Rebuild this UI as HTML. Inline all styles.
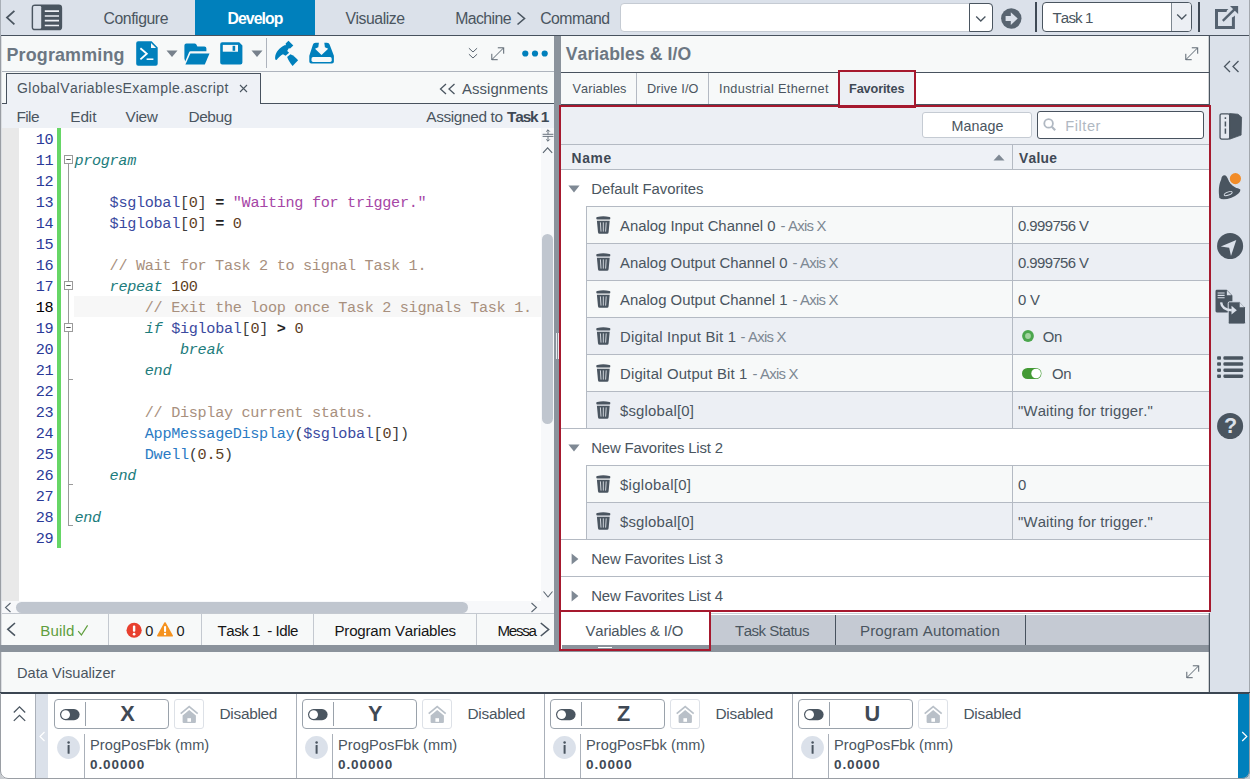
<!DOCTYPE html>
<html lang="en"><head><meta charset="utf-8"><title>Automation1 Studio - Variables &amp; I/O Favorites</title>
<style>
html,body{margin:0;padding:0;}
body{width:1250px;height:779px;overflow:hidden;position:relative;background:#dbe1ea;font-family:"Liberation Sans",Arial,sans-serif;font-kerning:none;}
#app{position:absolute;left:0;top:0;width:1250px;height:779px;overflow:hidden;}
#app div,#app span,#app svg{position:absolute;box-sizing:border-box;}
.t{white-space:pre;line-height:1;}
.m{font-family:"Liberation Mono","DejaVu Sans Mono",monospace;}
</style></head><body><div id="app">
<div style="left:0px;top:0px;width:1250px;height:35px;background:#dbe1ea;"></div>
<div style="left:0px;top:35px;width:1250px;height:1px;background:#48525e;"></div>
<div style="left:195px;top:0px;width:120px;height:35px;background:#0080bc;"></div>
<span class="t" style="left:103.50px;top:10.63px;font-size:15.8px;color:#4a5560;letter-spacing:-0.44px;">Configure</span>
<span class="t" style="left:227.50px;top:10.63px;font-size:15.8px;color:#ffffff;letter-spacing:-0.91px;font-weight:bold;">Develop</span>
<span class="t" style="left:345.50px;top:10.63px;font-size:15.8px;color:#4a5560;letter-spacing:-0.47px;">Visualize</span>
<span class="t" style="left:455.20px;top:10.63px;font-size:15.8px;color:#4a5560;letter-spacing:-0.57px;">Machine</span>
<span class="t" style="left:540.20px;top:10.63px;font-size:15.8px;color:#4a5560;letter-spacing:-0.51px;">Command</span>
<svg style="left:5px;top:10px;" width="12" height="16" viewBox="0 0 12 16"><path d="M9.4 0.9 L2 7.6 L9.4 14.3" fill="none" stroke="#4a5560" stroke-width="1.8"/></svg>
<svg style="left:516px;top:11px;" width="11" height="15" viewBox="0 0 11 15"><path d="M1.5 1.5 L8.5 7.5 L1.5 13.5" fill="none" stroke="#4a5560" stroke-width="1.6"/></svg>
<svg style="left:31px;top:4px;" width="33" height="27" viewBox="0 0 33 27"><rect x="1.4" y="1.3" width="29" height="24.2" rx="2.6" fill="#4a5560" stroke="#4a5560" stroke-width="1.5"/><rect x="2.1" y="2.1" width="8.1" height="22.6" rx="1.2" fill="#dbe1ea"/><path d="M13.8 7.2h14.2M13.8 12h14.2M13.8 16.7h14.2M13.8 21.5h14.2" stroke="#edf0f5" stroke-width="1.7"/></svg>
<div style="left:620px;top:3px;width:372.5px;height:28.5px;background:#fff;border:1px solid #c5cbd3;border-radius:4px;"></div>
<div style="left:969px;top:3px;width:23.5px;height:28.5px;border:1px solid #4a5560;border-radius:0 4px 4px 0;"></div>
<svg style="left:975px;top:15px;" width="12" height="8" viewBox="0 0 12 8"><path d="M1.2 1.5 L5.8 6 L10.4 1.5" fill="none" stroke="#4a5560" stroke-width="1.3"/></svg>
<svg style="left:1000.8px;top:8px;" width="21" height="21" viewBox="0 0 21 21"><circle cx="10.3" cy="10.5" r="10.2" fill="#586470"/><path d="M4.6 8.1h5.2V4.2L16.7 10.6l-6.9 6.4v-3.9H4.6z" fill="#dbe1ea"/></svg>
<div style="left:1035px;top:2px;width:2px;height:29.5px;background:#3f4955;"></div>
<div style="left:1042px;top:2px;width:150px;height:29.5px;background:#fff;border:1px solid #4a5560;border-radius:4px;"></div>
<div style="left:1171px;top:3px;width:20px;height:27.5px;background:#eceff4;border-left:1px solid #7d8791;border-radius:0 3px 3px 0;"></div>
<svg style="left:1176px;top:13px;" width="12" height="8" viewBox="0 0 12 8"><path d="M1.2 1.5 L5.8 6 L10.4 1.5" fill="none" stroke="#4a5560" stroke-width="1.3"/></svg>
<span class="t" style="left:1052.50px;top:10.22px;font-size:15.1px;color:#4a5560;letter-spacing:-0.86px;">Task 1</span>
<div style="left:1197.5px;top:2px;width:2px;height:29.5px;background:#3f4955;"></div>
<svg style="left:1215px;top:5px;" width="24" height="25" viewBox="0 0 24 25"><path d="M11.6 5.5H1.5V22.4H18.4V12.6" fill="none" stroke="#556270" stroke-width="3"/><path d="M11.4 4L13.4 4L10.4 7L10.4 4z M16.9 13L19.9 10.4V13z" fill="#556270"/><path d="M7.8 15.8L20.5 3.4" fill="none" stroke="#556270" stroke-width="2.4"/><path d="M15 1H23.1V8.9z" fill="#556270"/></svg>
<div style="left:0px;top:36px;width:1px;height:657px;background:#9a9ea4;"></div>
<div style="left:1px;top:36px;width:1px;height:657px;background:#dcdfe3;"></div>
<div style="left:0px;top:0px;width:1px;height:36px;background:#a9afb7;"></div>
<div style="left:2px;top:36px;width:552px;height:35px;background:#f7f9f9;"></div>
<div style="left:2px;top:71px;width:552px;height:1px;background:#aeb4bd;"></div>
<span class="t" style="left:6.50px;top:46.55px;font-size:17.9px;color:#6c7783;letter-spacing:0.16px;font-weight:bold;">Programming</span>
<svg style="left:135.5px;top:41px;" width="22" height="25" viewBox="0 0 22 25"><path d="M2.2 0.3H15.6L21.7 6.4V22.8a2 2 0 0 1-2 2H2.2a2 2 0 0 1-2-2V2.3a2 2 0 0 1 2-2z" fill="#0080bc"/><path d="M15 1.9V7H20.1z" fill="#f7f9f9"/><path d="M4.4 7.2L10.8 12.8L4.4 18.4" fill="none" stroke="#fff" stroke-width="1.8"/><path d="M10.6 18.2h6.8" stroke="#fff" stroke-width="1.5"/></svg>
<svg style="left:165.5px;top:49.5px;" width="12" height="7.5" viewBox="0 0 12 7.5"><path d="M0.5 0.6h11L6 6.9z" fill="#77818c"/></svg>
<svg style="left:183.5px;top:42.5px;" width="26" height="22" viewBox="0 0 26 22"><path d="M0.4 15.5V2.4a2 2 0 0 1 2-2H10.6a2 2 0 0 1 1.6 0.9l1.2 2.1H20.4a2 2 0 0 1 2 2V8.3H6.6a1.6 1.6 0 0 0-1.5 1L1.2 18.5z" fill="#0080bc"/><path d="M6.4 10.4H25.5L20.8 21.4H1.4z" fill="#0080bc"/></svg>
<svg style="left:220px;top:42px;" width="23" height="23" viewBox="0 0 23 23"><path d="M2.2 0.3H19.2L22.4 3.5V20.5a2 2 0 0 1-2 2H2.2a2 2 0 0 1-2-2V2.3a2 2 0 0 1 2-2z" fill="#0080bc"/><rect x="2.8" y="2.9" width="15.2" height="6.8" fill="#f7f9f9"/><rect x="12.6" y="3.8" width="2.6" height="5" fill="#0080bc"/></svg>
<svg style="left:250.5px;top:49.5px;" width="12" height="7.5" viewBox="0 0 12 7.5"><path d="M0.5 0.6h11L6 6.9z" fill="#77818c"/></svg>
<div style="left:266px;top:38px;width:1px;height:30px;background:#aeb4bd;"></div>
<svg style="left:274px;top:40px;" width="26" height="27" viewBox="0 0 26 27"><g fill="#0080bc"><path d="M1.2 19.4C0.6 13.6 4 9 8.7 6.2C10 5.4 11.2 5.2 11.9 5L11.6 3.4L14.5 0.8L19.3 5.6L16.1 8.5L14.8 8.2L13.2 11L15.1 12.8L11.6 15.8L9 14.2C6.6 15.4 4.4 17.6 2.6 20z"/><path d="M13.1 17.1L16.4 14.2C19.4 15.4 22 17.6 24.1 20.3L18.6 26C16.4 23.4 14.4 20.6 13.1 17.1z"/></g></svg>
<svg style="left:309px;top:42px;" width="26" height="23" viewBox="0 0 26 23"><path d="M6.7 0.7H9.9L9.3 5.2 6 6.8 12.5 12.9 19.2 6.8 15.9 5.2 15.3 0.7H17.9C19.4 0.7 20.3 1.6 20.8 3L24.9 13.8V19.5a2 2 0 0 1-2 2H2.3a2 2 0 0 1-2-2V13.8L3.8 3C4.3 1.6 5.2 0.7 6.7 0.7z" fill="#0080bc"/><rect x="2.5" y="15.1" width="20.2" height="4.8" rx="1.6" fill="#f7f9f9"/></svg>
<svg style="left:468px;top:47px;" width="11" height="12" viewBox="0 0 11 12"><path d="M0.9 1.2L5 5L9.1 1.2M0.9 7.2L5 11L9.1 7.2" fill="none" stroke="#5a6570" stroke-width="1"/></svg>
<svg style="left:491px;top:47px;" width="14" height="14" viewBox="0 0 14 14"><path d="M0.8 12.7L12.7 0.8M6.8 0.8H12.7V6.7M0.8 6.8V12.7H6.7" fill="none" stroke="#5a6570" stroke-width="1"/></svg>
<svg style="left:522px;top:49.5px;" width="26" height="7" viewBox="0 0 26 7"><circle cx="3.3" cy="3.5" r="3.1" fill="#0080bc"/><circle cx="13" cy="3.5" r="3.1" fill="#0080bc"/><circle cx="22.7" cy="3.5" r="3.1" fill="#0080bc"/></svg>
<div style="left:2px;top:72px;width:552px;height:31px;background:#f7f9f9;"></div>
<div style="left:2px;top:103px;width:552px;height:1px;background:#48525e;"></div>
<div style="left:6px;top:73px;width:254.5px;height:31px;background:#eef1f6;border:1px solid #48525e;border-bottom:0;"></div>
<span class="t" style="left:17.00px;top:80.65px;font-size:14px;color:#4a5560;letter-spacing:0.45px;">GlobalVariablesExample.ascript</span>
<svg style="left:239px;top:84px;" width="9" height="9" viewBox="0 0 9 9"><path d="M1 1L8 8M8 1L1 8" stroke="#4a5560" stroke-width="1.1"/></svg>
<svg style="left:439px;top:82.5px;" width="17" height="12" viewBox="0 0 17 12"><path d="M7 1L1.5 6L7 11M15.5 1L10 6L15.5 11" fill="none" stroke="#4a5560" stroke-width="1.3"/></svg>
<span class="t" style="left:462.00px;top:81.79px;font-size:14.9px;color:#4a5560;letter-spacing:0.07px;">Assignments</span>
<div style="left:2px;top:104px;width:552px;height:24px;background:#eef1f6;"></div>
<span class="t" style="left:16.50px;top:108.96px;font-size:15.4px;color:#4a5560;letter-spacing:-0.61px;">File</span>
<span class="t" style="left:70.25px;top:108.96px;font-size:15.4px;color:#4a5560;letter-spacing:-0.1px;">Edit</span>
<span class="t" style="left:125.50px;top:108.96px;font-size:15.4px;color:#4a5560;letter-spacing:-0.29px;">View</span>
<span class="t" style="left:188.50px;top:108.96px;font-size:15.4px;color:#4a5560;letter-spacing:-0.41px;">Debug</span>
<span class="t" style="left:426.25px;top:108.96px;font-size:15.4px;color:#4a5560;letter-spacing:-0.37px;">Assigned to</span>
<span class="t" style="left:507.00px;top:108.96px;font-size:15.4px;color:#3f4955;letter-spacing:-1.14px;font-weight:bold;">Task 1</span>
<div style="left:2px;top:128px;width:552px;height:473px;background:#ffffff;"></div>
<div style="left:2px;top:128px;width:17px;height:473px;background:#e9e9e9;"></div>
<div style="left:57px;top:128px;width:4px;height:420px;background:#66d666;"></div>
<div style="left:74px;top:296px;width:467px;height:21px;background:#f7f7f7;"></div>
<span class="t m" style="left:35.8px;top:133.26px;font-size:15.2px;letter-spacing:-0.32px;color:#2a3a98;">10</span>
<span class="t m" style="left:35.8px;top:154.26px;font-size:15.2px;letter-spacing:-0.32px;color:#2a3a98;">11</span>
<span class="t m" style="left:35.8px;top:175.26px;font-size:15.2px;letter-spacing:-0.32px;color:#2a3a98;">12</span>
<span class="t m" style="left:35.8px;top:196.26px;font-size:15.2px;letter-spacing:-0.32px;color:#2a3a98;">13</span>
<span class="t m" style="left:35.8px;top:217.26px;font-size:15.2px;letter-spacing:-0.32px;color:#2a3a98;">14</span>
<span class="t m" style="left:35.8px;top:238.26px;font-size:15.2px;letter-spacing:-0.32px;color:#2a3a98;">15</span>
<span class="t m" style="left:35.8px;top:259.26px;font-size:15.2px;letter-spacing:-0.32px;color:#2a3a98;">16</span>
<span class="t m" style="left:35.8px;top:280.26px;font-size:15.2px;letter-spacing:-0.32px;color:#2a3a98;">17</span>
<span class="t m" style="left:35.8px;top:301.26px;font-size:15.2px;letter-spacing:-0.32px;color:#000000;">18</span>
<span class="t m" style="left:35.8px;top:322.26px;font-size:15.2px;letter-spacing:-0.32px;color:#2a3a98;">19</span>
<span class="t m" style="left:35.8px;top:343.26px;font-size:15.2px;letter-spacing:-0.32px;color:#2a3a98;">20</span>
<span class="t m" style="left:35.8px;top:364.26px;font-size:15.2px;letter-spacing:-0.32px;color:#2a3a98;">21</span>
<span class="t m" style="left:35.8px;top:385.26px;font-size:15.2px;letter-spacing:-0.32px;color:#2a3a98;">22</span>
<span class="t m" style="left:35.8px;top:406.26px;font-size:15.2px;letter-spacing:-0.32px;color:#2a3a98;">23</span>
<span class="t m" style="left:35.8px;top:427.26px;font-size:15.2px;letter-spacing:-0.32px;color:#2a3a98;">24</span>
<span class="t m" style="left:35.8px;top:448.26px;font-size:15.2px;letter-spacing:-0.32px;color:#2a3a98;">25</span>
<span class="t m" style="left:35.8px;top:469.26px;font-size:15.2px;letter-spacing:-0.32px;color:#2a3a98;">26</span>
<span class="t m" style="left:35.8px;top:490.26px;font-size:15.2px;letter-spacing:-0.32px;color:#2a3a98;">27</span>
<span class="t m" style="left:35.8px;top:511.26px;font-size:15.2px;letter-spacing:-0.32px;color:#2a3a98;">28</span>
<span class="t m" style="left:35.8px;top:532.26px;font-size:15.2px;letter-spacing:-0.32px;color:#2a3a98;">29</span>
<span class="t m" style="left:74.40px;top:154.26px;font-size:15.2px;letter-spacing:-0.32px;color:#1c7c7c;font-style:italic;">program</span>
<span class="t m" style="left:109.60px;top:196.26px;font-size:15.2px;letter-spacing:-0.32px;color:#3b4a9f;">$sglobal</span>
<span class="t m" style="left:180.00px;top:196.26px;font-size:15.2px;letter-spacing:-0.32px;color:#3c3c3c;">[</span>
<span class="t m" style="left:188.80px;top:196.26px;font-size:15.2px;letter-spacing:-0.32px;color:#5c3d1e;">0</span>
<span class="t m" style="left:197.60px;top:196.26px;font-size:15.2px;letter-spacing:-0.32px;color:#3c3c3c;">]</span>
<span class="t m" style="left:206.40px;top:196.26px;font-size:15.2px;letter-spacing:-0.32px;color:#3c3c3c;"> </span>
<span class="t m" style="left:215.20px;top:196.26px;font-size:15.2px;letter-spacing:-0.32px;color:#222222;font-weight:bold;">=</span>
<span class="t m" style="left:224.00px;top:196.26px;font-size:15.2px;letter-spacing:-0.32px;color:#3c3c3c;"> </span>
<span class="t m" style="left:232.80px;top:196.26px;font-size:15.2px;letter-spacing:-0.32px;color:#a646a6;">"Waiting for trigger."</span>
<span class="t m" style="left:109.60px;top:217.26px;font-size:15.2px;letter-spacing:-0.32px;color:#3b4a9f;">$iglobal</span>
<span class="t m" style="left:180.00px;top:217.26px;font-size:15.2px;letter-spacing:-0.32px;color:#3c3c3c;">[</span>
<span class="t m" style="left:188.80px;top:217.26px;font-size:15.2px;letter-spacing:-0.32px;color:#5c3d1e;">0</span>
<span class="t m" style="left:197.60px;top:217.26px;font-size:15.2px;letter-spacing:-0.32px;color:#3c3c3c;">]</span>
<span class="t m" style="left:206.40px;top:217.26px;font-size:15.2px;letter-spacing:-0.32px;color:#3c3c3c;"> </span>
<span class="t m" style="left:215.20px;top:217.26px;font-size:15.2px;letter-spacing:-0.32px;color:#222222;font-weight:bold;">=</span>
<span class="t m" style="left:224.00px;top:217.26px;font-size:15.2px;letter-spacing:-0.32px;color:#3c3c3c;"> </span>
<span class="t m" style="left:232.80px;top:217.26px;font-size:15.2px;letter-spacing:-0.32px;color:#5c3d1e;">0</span>
<span class="t m" style="left:109.60px;top:259.26px;font-size:15.2px;letter-spacing:-0.32px;color:#a8907e;">// Wait for Task 2 to signal Task 1.</span>
<span class="t m" style="left:109.60px;top:280.26px;font-size:15.2px;letter-spacing:-0.32px;color:#1c7c7c;font-style:italic;">repeat</span>
<span class="t m" style="left:162.40px;top:280.26px;font-size:15.2px;letter-spacing:-0.32px;color:#3c3c3c;"> </span>
<span class="t m" style="left:171.20px;top:280.26px;font-size:15.2px;letter-spacing:-0.32px;color:#5c3d1e;">100</span>
<span class="t m" style="left:144.80px;top:301.26px;font-size:15.2px;letter-spacing:-0.32px;color:#a8907e;">// Exit the loop once Task 2 signals Task 1.</span>
<span class="t m" style="left:144.80px;top:322.26px;font-size:15.2px;letter-spacing:-0.32px;color:#1c7c7c;font-style:italic;">if</span>
<span class="t m" style="left:162.40px;top:322.26px;font-size:15.2px;letter-spacing:-0.32px;color:#3c3c3c;"> </span>
<span class="t m" style="left:171.20px;top:322.26px;font-size:15.2px;letter-spacing:-0.32px;color:#3b4a9f;">$iglobal</span>
<span class="t m" style="left:241.60px;top:322.26px;font-size:15.2px;letter-spacing:-0.32px;color:#3c3c3c;">[</span>
<span class="t m" style="left:250.40px;top:322.26px;font-size:15.2px;letter-spacing:-0.32px;color:#5c3d1e;">0</span>
<span class="t m" style="left:259.20px;top:322.26px;font-size:15.2px;letter-spacing:-0.32px;color:#3c3c3c;">]</span>
<span class="t m" style="left:268.00px;top:322.26px;font-size:15.2px;letter-spacing:-0.32px;color:#3c3c3c;"> </span>
<span class="t m" style="left:276.80px;top:322.26px;font-size:15.2px;letter-spacing:-0.32px;color:#222222;font-weight:bold;">&gt;</span>
<span class="t m" style="left:285.60px;top:322.26px;font-size:15.2px;letter-spacing:-0.32px;color:#3c3c3c;"> </span>
<span class="t m" style="left:294.40px;top:322.26px;font-size:15.2px;letter-spacing:-0.32px;color:#5c3d1e;">0</span>
<span class="t m" style="left:180.00px;top:343.26px;font-size:15.2px;letter-spacing:-0.32px;color:#1c7c7c;font-style:italic;">break</span>
<span class="t m" style="left:144.80px;top:364.26px;font-size:15.2px;letter-spacing:-0.32px;color:#1c7c7c;font-style:italic;">end</span>
<span class="t m" style="left:144.80px;top:406.26px;font-size:15.2px;letter-spacing:-0.32px;color:#a8907e;">// Display current status.</span>
<span class="t m" style="left:144.80px;top:427.26px;font-size:15.2px;letter-spacing:-0.32px;color:#2b7bc4;">AppMessageDisplay</span>
<span class="t m" style="left:294.40px;top:427.26px;font-size:15.2px;letter-spacing:-0.32px;color:#3c3c3c;">(</span>
<span class="t m" style="left:303.20px;top:427.26px;font-size:15.2px;letter-spacing:-0.32px;color:#3b4a9f;">$sglobal</span>
<span class="t m" style="left:373.60px;top:427.26px;font-size:15.2px;letter-spacing:-0.32px;color:#3c3c3c;">[</span>
<span class="t m" style="left:382.40px;top:427.26px;font-size:15.2px;letter-spacing:-0.32px;color:#5c3d1e;">0</span>
<span class="t m" style="left:391.20px;top:427.26px;font-size:15.2px;letter-spacing:-0.32px;color:#3c3c3c;">]</span>
<span class="t m" style="left:400.00px;top:427.26px;font-size:15.2px;letter-spacing:-0.32px;color:#3c3c3c;">)</span>
<span class="t m" style="left:144.80px;top:448.26px;font-size:15.2px;letter-spacing:-0.32px;color:#2b7bc4;">Dwell</span>
<span class="t m" style="left:188.80px;top:448.26px;font-size:15.2px;letter-spacing:-0.32px;color:#3c3c3c;">(</span>
<span class="t m" style="left:197.60px;top:448.26px;font-size:15.2px;letter-spacing:-0.32px;color:#5c3d1e;">0.5</span>
<span class="t m" style="left:224.00px;top:448.26px;font-size:15.2px;letter-spacing:-0.32px;color:#3c3c3c;">)</span>
<span class="t m" style="left:109.60px;top:469.26px;font-size:15.2px;letter-spacing:-0.32px;color:#1c7c7c;font-style:italic;">end</span>
<span class="t m" style="left:74.40px;top:511.26px;font-size:15.2px;letter-spacing:-0.32px;color:#1c7c7c;font-style:italic;">end</span>
<div style="left:68px;top:164px;width:1px;height:362px;background:#9a9a9a;"></div>
<svg style="left:64px;top:154.5px;" width="9" height="9" viewBox="0 0 9 9"><rect x="0.5" y="0.5" width="8" height="8" fill="#fff" stroke="#9a9a9a" stroke-width="1"/><path d="M2.3 4.5h4.4" stroke="#555" stroke-width="1"/></svg>
<svg style="left:64px;top:280.5px;" width="9" height="9" viewBox="0 0 9 9"><rect x="0.5" y="0.5" width="8" height="8" fill="#fff" stroke="#9a9a9a" stroke-width="1"/><path d="M2.3 4.5h4.4" stroke="#555" stroke-width="1"/></svg>
<svg style="left:64px;top:322.5px;" width="9" height="9" viewBox="0 0 9 9"><rect x="0.5" y="0.5" width="8" height="8" fill="#fff" stroke="#9a9a9a" stroke-width="1"/><path d="M2.3 4.5h4.4" stroke="#555" stroke-width="1"/></svg>
<div style="left:68px;top:379px;width:5px;height:1px;background:#9a9a9a;"></div>
<div style="left:68px;top:484px;width:5px;height:1px;background:#9a9a9a;"></div>
<div style="left:68px;top:525px;width:5px;height:1px;background:#9a9a9a;"></div>
<div style="left:541px;top:128px;width:13px;height:473px;background:#f7f8fa;"></div>
<div style="left:541.5px;top:234px;width:11.5px;height:190px;background:#c0c6cf;border-radius:6px;"></div>
<svg style="left:541.5px;top:129px;" width="12" height="14" viewBox="0 0 12 14"><path d="M0.6 5.3h10.8M0.6 7.4h10.8M6 0.8v4.5M6 7.4v4.8M4.2 2.6L6 0.8L7.8 2.6M4.2 10.4L6 12.2L7.8 10.4" fill="none" stroke="#5a6570" stroke-width="0.9"/></svg>
<svg style="left:541.5px;top:146px;" width="12" height="9" viewBox="0 0 12 9"><path d="M1 6.8L5.6 1.8L10.2 6.8" fill="none" stroke="#5a6570" stroke-width="1.1"/></svg>
<svg style="left:542px;top:590px;" width="12" height="9" viewBox="0 0 12 9"><path d="M1.5 1.5L6 7L10.5 1.5" fill="none" stroke="#5a6570" stroke-width="1.1"/></svg>
<div style="left:2px;top:601px;width:552px;height:12.5px;background:#f7f8fa;"></div>
<div style="left:16px;top:601.5px;width:451.5px;height:11px;background:#c0c6cf;border-radius:6px;"></div>
<svg style="left:4px;top:602px;" width="8" height="11" viewBox="0 0 8 11"><path d="M6.5 1L1.5 5.5L6.5 10" fill="none" stroke="#5a6570" stroke-width="1.1"/></svg>
<svg style="left:529.5px;top:602px;" width="8" height="11" viewBox="0 0 8 11"><path d="M1.5 1L6.5 5.5L1.5 10" fill="none" stroke="#5a6570" stroke-width="1.1"/></svg>
<div style="left:2px;top:613px;width:552px;height:32px;background:#f7f9f9;border-top:1px solid #c4c9d0;"></div>
<svg style="left:6px;top:622.3px;" width="11" height="15" viewBox="0 0 11 15"><path d="M9 1L1.8 7.3L9 13.6" fill="none" stroke="#4a5560" stroke-width="1.6"/></svg>
<span class="t" style="left:40.25px;top:623.12px;font-size:15.1px;color:#5f9e3d;letter-spacing:0.17px;">Build</span>
<svg style="left:77px;top:623.8px;" width="13" height="13" viewBox="0 0 13 13"><path d="M1.2 7.2L4.4 11L10.6 1.4" fill="none" stroke="#5f9e3d" stroke-width="1.2"/></svg>
<div style="left:108px;top:614px;width:1px;height:31px;background:#c4c9d0;"></div>
<svg style="left:125.5px;top:621.8px;" width="16.5" height="16.5" viewBox="0 0 16.5 16.5"><circle cx="8.1" cy="8.25" r="7.6" fill="#e8402f"/><rect x="6.9" y="3.4" width="2.4" height="6.4" rx="1" fill="#fff"/><circle cx="8.1" cy="12.2" r="1.35" fill="#fff"/></svg>
<span class="t" style="left:145.25px;top:623.54px;font-size:14.6px;color:#1c1c1c;letter-spacing:-0.37px;">0</span>
<svg style="left:155.5px;top:621.3px;" width="18" height="16" viewBox="0 0 18 16"><path d="M9 2L16.2 14.8H1.8z" fill="#f5921e" stroke="#f5921e" stroke-width="1.6" stroke-linejoin="round"/><rect x="8" y="5" width="2.1" height="6" rx="0.9" fill="#fff"/><circle cx="9.05" cy="13" r="1.2" fill="#fff"/></svg>
<span class="t" style="left:176.50px;top:623.54px;font-size:14.6px;color:#1c1c1c;letter-spacing:-0.37px;">0</span>
<div style="left:201px;top:614px;width:1px;height:31px;background:#c4c9d0;"></div>
<span class="t" style="left:217.50px;top:623.12px;font-size:15.1px;color:#151515;letter-spacing:-0.48px;">Task 1  - Idle</span>
<div style="left:313px;top:614px;width:1px;height:31px;background:#c4c9d0;"></div>
<span class="t" style="left:334.50px;top:623.12px;font-size:15.1px;color:#151515;letter-spacing:-0.21px;">Program Variables</span>
<div style="left:476px;top:614px;width:1px;height:31px;background:#c4c9d0;"></div>
<span class="t" style="left:497.50px;top:623.12px;font-size:15.1px;color:#151515;letter-spacing:-1.24px;">Messa</span>
<svg style="left:539px;top:622px;" width="12" height="16" viewBox="0 0 12 16"><path d="M1.8 1L9.6 7.5L1.8 14" fill="none" stroke="#4a5560" stroke-width="1.6"/></svg>
<div style="left:554px;top:36px;width:7px;height:610px;background:#8b939c;"></div>
<div style="left:555.5px;top:333px;width:1px;height:26px;background:#e8ebef;"></div>
<div style="left:557.5px;top:333px;width:1px;height:26px;background:#e8ebef;"></div>
<div style="left:561px;top:36px;width:649px;height:36px;background:#f7f9f9;"></div>
<div style="left:561px;top:72px;width:649px;height:1px;background:#48525e;"></div>
<span class="t" style="left:565.70px;top:46.10px;font-size:17.6px;color:#6c7783;letter-spacing:0.1px;font-weight:bold;">Variables &amp; I/O</span>
<svg style="left:1185px;top:47px;" width="14" height="14" viewBox="0 0 14 14"><path d="M0.8 12.7L12.7 0.8M6.8 0.8H12.7V6.7M0.8 6.8V12.7H6.7" fill="none" stroke="#5a6570" stroke-width="1"/></svg>
<div style="left:561px;top:73px;width:277px;height:31px;background:#f7f9f9;"></div>
<div style="left:916px;top:73px;width:294px;height:31px;background:#ffffff;"></div>
<div style="left:561px;top:104px;width:649px;height:1px;background:#48525e;"></div>
<div style="left:636px;top:73px;width:1px;height:31px;background:#b4bac3;"></div>
<div style="left:708px;top:73px;width:1px;height:31px;background:#b4bac3;"></div>
<span class="t" style="left:572.50px;top:82.65px;font-size:12.7px;color:#4a5560;letter-spacing:0.13px;">Variables</span>
<span class="t" style="left:647.00px;top:82.65px;font-size:12.7px;color:#4a5560;letter-spacing:0.18px;">Drive I/O</span>
<span class="t" style="left:719.00px;top:82.65px;font-size:12.7px;color:#4a5560;letter-spacing:0.36px;">Industrial Ethernet</span>
<div style="left:559px;top:105px;width:652px;height:507px;background:#eceff4;border:2.5px solid #a6192e;"></div>
<div style="left:838px;top:70px;width:78px;height:38px;background:#eceff4;border:2.5px solid #a6192e;"></div>
<span class="t" style="left:849.00px;top:82.65px;font-size:12.7px;color:#3f4955;letter-spacing:-0.12px;font-weight:bold;font-weight:bold;">Favorites</span>
<div style="left:921.5px;top:112px;width:110.5px;height:26px;background:#fff;border:1px solid #c5cbd3;border-radius:3px;"></div>
<span class="t" style="left:951.50px;top:119.10px;font-size:14.3px;color:#4a5560;letter-spacing:0.06px;">Manage</span>
<div style="left:1037px;top:111px;width:167px;height:28px;background:#fff;border:1px solid #48525e;border-radius:3px;"></div>
<svg style="left:1042.5px;top:117.5px;" width="15" height="15" viewBox="0 0 15 15"><circle cx="5.6" cy="5.4" r="4.3" fill="none" stroke="#b0b8c2" stroke-width="1.8"/><path d="M8.8 8.8L12.2 12.2" stroke="#b0b8c2" stroke-width="2.2"/></svg>
<span class="t" style="left:1065.25px;top:118.84px;font-size:14.6px;color:#b0b8c2;letter-spacing:0.56px;">Filter</span>
<div style="left:561px;top:144px;width:648px;height:26px;background:#eef1f6;border-top:1px solid #b4bac3;border-bottom:1px solid #b4bac3;"></div>
<span class="t" style="left:571.50px;top:151.52px;font-size:13.8px;color:#3f4955;letter-spacing:0.72px;font-weight:bold;">Name</span>
<span class="t" style="left:1019.00px;top:151.52px;font-size:13.8px;color:#3f4955;letter-spacing:0.3px;font-weight:bold;">Value</span>
<div style="left:1012px;top:145px;width:1px;height:24px;background:#b4bac3;"></div>
<svg style="left:993px;top:153.5px;" width="12" height="7" viewBox="0 0 12 7"><path d="M0.5 6.5L6 0.6L11.5 6.5z" fill="#7f8994"/></svg>
<div style="left:561px;top:170px;width:648px;height:440px;background:#ffffff;"></div>
<div style="left:561px;top:170px;width:648px;height:37px;background:#ffffff;"></div>
<div style="left:586px;top:206px;width:623px;height:1px;background:#b4bac3;"></div>
<svg style="left:568px;top:185px;" width="12" height="8" viewBox="0 0 12 8"><path d="M0.4 0.6h11.2L6 7.4z" fill="#7f8994"/></svg>
<span class="t" style="left:591.25px;top:181.89px;font-size:14.9px;color:#4a5560;letter-spacing:-0.02px;">Default Favorites</span>
<div style="left:586px;top:207px;width:623px;height:37px;background:#f7f9f9;border-bottom:1px solid #b4bac3;border-left:1px solid #b4bac3;"></div>
<div style="left:1012px;top:207px;width:1px;height:36px;background:#b4bac3;"></div>
<svg style="left:595.5px;top:216px;" width="15" height="18" viewBox="0 0 15 18"><path d="M1.2 0.9Q7.3 -0.6 13.4 0.9a0.9 0.9 0 0 1 0.9 0.9v0.8a0.9 0.9 0 0 1-0.9 0.9H1.2a0.9 0.9 0 0 1-0.9-0.9V1.8a0.9 0.9 0 0 1 0.9-0.9z" fill="#4a5560"/><path d="M0.9 4.7H13.7L12.6 16.3a1.6 1.6 0 0 1-1.6 1.5H3.6a1.6 1.6 0 0 1-1.6-1.5z" fill="#4a5560"/><path d="M4.4 6.4l0.6 9.2M7.3 6.4v9.2M10.2 6.4l-0.6 9.2" stroke="#dfe3e9" stroke-width="0.9" fill="none"/></svg>
<span class="t" style="left:620.00px;top:218.89px;font-size:14.9px;color:#4a5560;letter-spacing:-0.01px;">Analog Input Channel 0</span>
<span class="t" style="left:780.50px;top:218.89px;font-size:14.9px;color:#7d8893;letter-spacing:-0.76px;">- Axis X</span>
<span class="t" style="left:1018.10px;top:218.89px;font-size:14.9px;color:#4a5560;letter-spacing:-0.59px;">0.999756 V</span>
<div style="left:586px;top:244px;width:623px;height:37px;background:#eceff4;border-bottom:1px solid #b4bac3;border-left:1px solid #b4bac3;"></div>
<div style="left:1012px;top:244px;width:1px;height:36px;background:#b4bac3;"></div>
<svg style="left:595.5px;top:253px;" width="15" height="18" viewBox="0 0 15 18"><path d="M1.2 0.9Q7.3 -0.6 13.4 0.9a0.9 0.9 0 0 1 0.9 0.9v0.8a0.9 0.9 0 0 1-0.9 0.9H1.2a0.9 0.9 0 0 1-0.9-0.9V1.8a0.9 0.9 0 0 1 0.9-0.9z" fill="#4a5560"/><path d="M0.9 4.7H13.7L12.6 16.3a1.6 1.6 0 0 1-1.6 1.5H3.6a1.6 1.6 0 0 1-1.6-1.5z" fill="#4a5560"/><path d="M4.4 6.4l0.6 9.2M7.3 6.4v9.2M10.2 6.4l-0.6 9.2" stroke="#dfe3e9" stroke-width="0.9" fill="none"/></svg>
<span class="t" style="left:620.00px;top:255.89px;font-size:14.9px;color:#4a5560;letter-spacing:0.01px;">Analog Output Channel 0</span>
<span class="t" style="left:792.50px;top:255.89px;font-size:14.9px;color:#7d8893;letter-spacing:-0.76px;">- Axis X</span>
<span class="t" style="left:1018.10px;top:255.89px;font-size:14.9px;color:#4a5560;letter-spacing:-0.59px;">0.999756 V</span>
<div style="left:586px;top:281px;width:623px;height:37px;background:#f7f9f9;border-bottom:1px solid #b4bac3;border-left:1px solid #b4bac3;"></div>
<div style="left:1012px;top:281px;width:1px;height:36px;background:#b4bac3;"></div>
<svg style="left:595.5px;top:290px;" width="15" height="18" viewBox="0 0 15 18"><path d="M1.2 0.9Q7.3 -0.6 13.4 0.9a0.9 0.9 0 0 1 0.9 0.9v0.8a0.9 0.9 0 0 1-0.9 0.9H1.2a0.9 0.9 0 0 1-0.9-0.9V1.8a0.9 0.9 0 0 1 0.9-0.9z" fill="#4a5560"/><path d="M0.9 4.7H13.7L12.6 16.3a1.6 1.6 0 0 1-1.6 1.5H3.6a1.6 1.6 0 0 1-1.6-1.5z" fill="#4a5560"/><path d="M4.4 6.4l0.6 9.2M7.3 6.4v9.2M10.2 6.4l-0.6 9.2" stroke="#dfe3e9" stroke-width="0.9" fill="none"/></svg>
<span class="t" style="left:620.00px;top:292.89px;font-size:14.9px;color:#4a5560;letter-spacing:0.01px;">Analog Output Channel 1</span>
<span class="t" style="left:792.50px;top:292.89px;font-size:14.9px;color:#7d8893;letter-spacing:-0.76px;">- Axis X</span>
<span class="t" style="left:1018.10px;top:292.89px;font-size:14.9px;color:#4a5560;letter-spacing:-0.23px;">0 V</span>
<div style="left:586px;top:318px;width:623px;height:37px;background:#eceff4;border-bottom:1px solid #b4bac3;border-left:1px solid #b4bac3;"></div>
<div style="left:1012px;top:318px;width:1px;height:36px;background:#b4bac3;"></div>
<svg style="left:595.5px;top:327px;" width="15" height="18" viewBox="0 0 15 18"><path d="M1.2 0.9Q7.3 -0.6 13.4 0.9a0.9 0.9 0 0 1 0.9 0.9v0.8a0.9 0.9 0 0 1-0.9 0.9H1.2a0.9 0.9 0 0 1-0.9-0.9V1.8a0.9 0.9 0 0 1 0.9-0.9z" fill="#4a5560"/><path d="M0.9 4.7H13.7L12.6 16.3a1.6 1.6 0 0 1-1.6 1.5H3.6a1.6 1.6 0 0 1-1.6-1.5z" fill="#4a5560"/><path d="M4.4 6.4l0.6 9.2M7.3 6.4v9.2M10.2 6.4l-0.6 9.2" stroke="#dfe3e9" stroke-width="0.9" fill="none"/></svg>
<span class="t" style="left:620.00px;top:329.89px;font-size:14.9px;color:#4a5560;letter-spacing:0.19px;">Digital Input Bit 1</span>
<span class="t" style="left:740.50px;top:329.89px;font-size:14.9px;color:#7d8893;letter-spacing:-0.76px;">- Axis X</span>
<svg style="left:1022.3px;top:329.7px;" width="12" height="12" viewBox="0 0 12 12"><circle cx="6" cy="6" r="5.9" fill="#4ba64d"/><circle cx="6" cy="6" r="2.9" fill="#a3d3a0"/></svg>
<span class="t" style="left:1042.70px;top:329.89px;font-size:14.9px;color:#4a5560;letter-spacing:-0.38px;">On</span>
<div style="left:586px;top:355px;width:623px;height:37px;background:#f7f9f9;border-bottom:1px solid #b4bac3;border-left:1px solid #b4bac3;"></div>
<div style="left:1012px;top:355px;width:1px;height:36px;background:#b4bac3;"></div>
<svg style="left:595.5px;top:364px;" width="15" height="18" viewBox="0 0 15 18"><path d="M1.2 0.9Q7.3 -0.6 13.4 0.9a0.9 0.9 0 0 1 0.9 0.9v0.8a0.9 0.9 0 0 1-0.9 0.9H1.2a0.9 0.9 0 0 1-0.9-0.9V1.8a0.9 0.9 0 0 1 0.9-0.9z" fill="#4a5560"/><path d="M0.9 4.7H13.7L12.6 16.3a1.6 1.6 0 0 1-1.6 1.5H3.6a1.6 1.6 0 0 1-1.6-1.5z" fill="#4a5560"/><path d="M4.4 6.4l0.6 9.2M7.3 6.4v9.2M10.2 6.4l-0.6 9.2" stroke="#dfe3e9" stroke-width="0.9" fill="none"/></svg>
<span class="t" style="left:620.00px;top:366.89px;font-size:14.9px;color:#4a5560;letter-spacing:0.17px;">Digital Output Bit 1</span>
<span class="t" style="left:752.50px;top:366.89px;font-size:14.9px;color:#7d8893;letter-spacing:-0.76px;">- Axis X</span>
<svg style="left:1021.9px;top:368px;" width="20" height="11" viewBox="0 0 20 11"><rect x="0" y="0" width="19.5" height="11" rx="5.5" fill="#439a35"/><circle cx="14.1" cy="5.5" r="4.8" fill="#fff"/></svg>
<span class="t" style="left:1051.90px;top:366.89px;font-size:14.9px;color:#4a5560;letter-spacing:-0.28px;">On</span>
<div style="left:586px;top:392px;width:623px;height:37px;background:#eceff4;border-bottom:1px solid #b4bac3;border-left:1px solid #b4bac3;"></div>
<div style="left:1012px;top:392px;width:1px;height:36px;background:#b4bac3;"></div>
<svg style="left:595.5px;top:401px;" width="15" height="18" viewBox="0 0 15 18"><path d="M1.2 0.9Q7.3 -0.6 13.4 0.9a0.9 0.9 0 0 1 0.9 0.9v0.8a0.9 0.9 0 0 1-0.9 0.9H1.2a0.9 0.9 0 0 1-0.9-0.9V1.8a0.9 0.9 0 0 1 0.9-0.9z" fill="#4a5560"/><path d="M0.9 4.7H13.7L12.6 16.3a1.6 1.6 0 0 1-1.6 1.5H3.6a1.6 1.6 0 0 1-1.6-1.5z" fill="#4a5560"/><path d="M4.4 6.4l0.6 9.2M7.3 6.4v9.2M10.2 6.4l-0.6 9.2" stroke="#dfe3e9" stroke-width="0.9" fill="none"/></svg>
<div style="left:561px;top:428px;width:25px;height:1px;background:#b4bac3;"></div>
<span class="t" style="left:620.00px;top:403.89px;font-size:14.9px;color:#4a5560;letter-spacing:0.19px;">$sglobal[0]</span>
<span class="t" style="left:1018.10px;top:403.89px;font-size:14.9px;color:#4a5560;letter-spacing:0.12px;">"Waiting for trigger."</span>
<div style="left:561px;top:429px;width:648px;height:37px;background:#ffffff;"></div>
<div style="left:586px;top:465px;width:623px;height:1px;background:#b4bac3;"></div>
<svg style="left:568px;top:444px;" width="12" height="8" viewBox="0 0 12 8"><path d="M0.4 0.6h11.2L6 7.4z" fill="#7f8994"/></svg>
<span class="t" style="left:591.25px;top:440.89px;font-size:14.9px;color:#4a5560;letter-spacing:-0.17px;">New Favorites List 2</span>
<div style="left:586px;top:466px;width:623px;height:37px;background:#f7f9f9;border-bottom:1px solid #b4bac3;border-left:1px solid #b4bac3;"></div>
<div style="left:1012px;top:466px;width:1px;height:36px;background:#b4bac3;"></div>
<svg style="left:595.5px;top:475px;" width="15" height="18" viewBox="0 0 15 18"><path d="M1.2 0.9Q7.3 -0.6 13.4 0.9a0.9 0.9 0 0 1 0.9 0.9v0.8a0.9 0.9 0 0 1-0.9 0.9H1.2a0.9 0.9 0 0 1-0.9-0.9V1.8a0.9 0.9 0 0 1 0.9-0.9z" fill="#4a5560"/><path d="M0.9 4.7H13.7L12.6 16.3a1.6 1.6 0 0 1-1.6 1.5H3.6a1.6 1.6 0 0 1-1.6-1.5z" fill="#4a5560"/><path d="M4.4 6.4l0.6 9.2M7.3 6.4v9.2M10.2 6.4l-0.6 9.2" stroke="#dfe3e9" stroke-width="0.9" fill="none"/></svg>
<span class="t" style="left:620.00px;top:477.89px;font-size:14.9px;color:#4a5560;letter-spacing:0.31px;">$iglobal[0]</span>
<span class="t" style="left:1018.10px;top:477.89px;font-size:14.9px;color:#4a5560;letter-spacing:-0.19px;">0</span>
<div style="left:586px;top:503px;width:623px;height:37px;background:#eceff4;border-bottom:1px solid #b4bac3;border-left:1px solid #b4bac3;"></div>
<div style="left:1012px;top:503px;width:1px;height:36px;background:#b4bac3;"></div>
<svg style="left:595.5px;top:512px;" width="15" height="18" viewBox="0 0 15 18"><path d="M1.2 0.9Q7.3 -0.6 13.4 0.9a0.9 0.9 0 0 1 0.9 0.9v0.8a0.9 0.9 0 0 1-0.9 0.9H1.2a0.9 0.9 0 0 1-0.9-0.9V1.8a0.9 0.9 0 0 1 0.9-0.9z" fill="#4a5560"/><path d="M0.9 4.7H13.7L12.6 16.3a1.6 1.6 0 0 1-1.6 1.5H3.6a1.6 1.6 0 0 1-1.6-1.5z" fill="#4a5560"/><path d="M4.4 6.4l0.6 9.2M7.3 6.4v9.2M10.2 6.4l-0.6 9.2" stroke="#dfe3e9" stroke-width="0.9" fill="none"/></svg>
<div style="left:561px;top:539px;width:25px;height:1px;background:#b4bac3;"></div>
<span class="t" style="left:620.00px;top:514.89px;font-size:14.9px;color:#4a5560;letter-spacing:0.19px;">$sglobal[0]</span>
<span class="t" style="left:1018.10px;top:514.89px;font-size:14.9px;color:#4a5560;letter-spacing:0.12px;">"Waiting for trigger."</span>
<div style="left:561px;top:540px;width:648px;height:37px;background:#ffffff;border-bottom:1px solid #b4bac3;"></div>
<svg style="left:570.5px;top:552.5px;" width="8" height="12" viewBox="0 0 8 12"><path d="M0.6 0.4v11.2L7.4 6z" fill="#7f8994"/></svg>
<span class="t" style="left:591.25px;top:551.89px;font-size:14.9px;color:#4a5560;letter-spacing:-0.17px;">New Favorites List 3</span>
<div style="left:561px;top:577px;width:648px;height:37px;background:#ffffff;border-bottom:1px solid #b4bac3;"></div>
<svg style="left:570.5px;top:589.5px;" width="8" height="12" viewBox="0 0 8 12"><path d="M0.6 0.4v11.2L7.4 6z" fill="#7f8994"/></svg>
<span class="t" style="left:591.25px;top:588.89px;font-size:14.9px;color:#4a5560;letter-spacing:-0.17px;">New Favorites List 4</span>
<div style="left:559px;top:105px;width:652px;height:507px;background:transparent;border:2.5px solid #a6192e;"></div>
<div style="left:561px;top:613px;width:649px;height:1px;background:#c9ced5;"></div>
<div style="left:561px;top:614px;width:649px;height:1px;background:#ffffff;"></div>
<div style="left:561px;top:615px;width:649px;height:30px;background:#c5cad3;"></div>
<div style="left:835px;top:615px;width:1px;height:30px;background:#48525e;"></div>
<div style="left:1025px;top:615px;width:1px;height:30px;background:#48525e;"></div>
<span class="t" style="left:735.00px;top:623.22px;font-size:15.1px;color:#4a5560;letter-spacing:-0.52px;">Task Status</span>
<span class="t" style="left:860.00px;top:623.22px;font-size:15.1px;color:#4a5560;letter-spacing:0.09px;">Program Automation</span>
<div style="left:0px;top:645px;width:1210px;height:7px;background:#8b939c;"></div>
<div style="left:559px;top:610px;width:152px;height:41px;background:#ffffff;border:2.5px solid #a6192e;"></div>
<span class="t" style="left:585.50px;top:624.09px;font-size:14.9px;color:#4a5560;letter-spacing:-0.16px;">Variables &amp; I/O</span>
<div style="left:561.5px;top:645px;width:147px;height:3.5px;background:#8b939c;"></div>
<div style="left:597.5px;top:647px;width:14.5px;height:1px;background:#ffffff;"></div>
<div style="left:1209px;top:36px;width:1px;height:69px;background:#4a5560;"></div>
<div style="left:1208px;top:36px;width:1px;height:69px;background:rgba(74,85,96,0.25);"></div>
<svg style="left:1222.5px;top:60px;" width="17" height="13" viewBox="0 0 17 13"><path d="M7 1L1.5 6.5L7 12M15.5 1L10 6.5L15.5 12" fill="none" stroke="#4a5560" stroke-width="1.3"/></svg>
<svg style="left:1218.5px;top:112.5px;" width="24" height="27" viewBox="0 0 24 27"><path d="M10.6 0.5L19 1.2 22.6 4.2 22.1 22.1 10.6 26.2z" fill="#4a5560" stroke="#4a5560" stroke-width="0.8" stroke-linejoin="round"/><rect x="1.05" y="0.85" width="9.6" height="25.2" rx="1.6" fill="#e4e8ef" stroke="#4a5560" stroke-width="1.3"/><path d="M6.4 4.2v1.7M6.4 8.4v5.2M6.4 15.5v5.2" stroke="#4a5560" stroke-width="1.5"/></svg>
<svg style="left:1218px;top:171.5px;" width="26" height="29" viewBox="0 0 26 29"><path d="M3.2 7.4C3.6 3.6 6.6 2 8.6 4.6C10.4 7.4 11.6 11 14.4 13.4C16.8 15.4 19.8 16.4 22.6 17.5L1.6 26.2C0.2 19.4 0.8 12.4 3.2 7.4z" fill="#4a5560"/><ellipse cx="11.9" cy="21.8" rx="11" ry="4.2" transform="rotate(-21 11.9 21.8)" fill="#4a5560"/><ellipse cx="10.2" cy="21.6" rx="4.2" ry="1.5" transform="rotate(-21 10.2 21.6)" fill="#4a5560" stroke="#dbe1ea" stroke-width="0.9"/><circle cx="17.4" cy="6.6" r="6.3" fill="#f28c28" stroke="#dbe1ea" stroke-width="1.4"/></svg>
<svg style="left:1217px;top:232.7px;" width="26.5" height="26.5" viewBox="0 0 26.5 26.5"><circle cx="13.1" cy="13.1" r="13.05" fill="#4a5560"/><path d="M19.3 6.9L3.8 13.5L12.2 14.7L14 22.9z" fill="#dbe1ea"/></svg>
<svg style="left:1214.5px;top:288.5px;" width="31" height="36" viewBox="0 0 31 36"><path d="M1.9 0.8H11.7L17.4 6.4V22a1.4 1.4 0 0 1-1.4 1.4H1.9A1.4 1.4 0 0 1 0.5 22V2.2A1.4 1.4 0 0 1 1.9 0.8z" fill="#4a5560"/><path d="M11.9 1.6V6.2H16.5z" fill="#dbe1ea"/><path d="M2.6 4h7M2.6 6.4h7M2.6 8.8h7" stroke="#dbe1ea" stroke-width="1.1"/><path d="M14.6 12.8H24.5L30.5 18.4V33.7a1.4 1.4 0 0 1-1.4 1.4H14.6a1.4 1.4 0 0 1-1.4-1.4V14.2a1.4 1.4 0 0 1 1.4-1.4z" fill="#4a5560" stroke="#dbe1ea" stroke-width="1"/><path d="M24.7 13.6V18.2H29.5z" fill="#dbe1ea"/><path d="M6.1 13.4C6.6 18 10 21 16.8 21.2" fill="none" stroke="#dbe1ea" stroke-width="2.4"/><path d="M16.5 16.8L21.8 21.2L16.5 25.6z" fill="#dbe1ea"/></svg>
<svg style="left:1217px;top:356px;" width="27" height="23" viewBox="0 0 27 23"><g fill="#4a5560"><rect x="0.1" y="0.3" width="3.9" height="3.5" rx="0.8"/><rect x="6.4" y="0.3" width="19.8" height="3.5" rx="1.3"/><rect x="0.1" y="6.3" width="3.9" height="3.5" rx="0.8"/><rect x="6.4" y="6.3" width="19.8" height="3.5" rx="1.3"/><rect x="0.1" y="12.4" width="3.9" height="3.5" rx="0.8"/><rect x="6.4" y="12.4" width="19.8" height="3.5" rx="1.3"/><rect x="0.1" y="18.4" width="3.9" height="3.5" rx="0.8"/><rect x="6.4" y="18.4" width="19.8" height="3.5" rx="1.3"/></g></svg>
<svg style="left:1217px;top:412.8px;" width="26.5" height="26.5" viewBox="0 0 26.5 26.5"><circle cx="13.1" cy="13.1" r="13.05" fill="#4a5560"/></svg>
<span class="t" style="left:1224px;top:415.5px;font-size:21.5px;font-weight:bold;color:#dbe1ea;">?</span>
<div style="left:1249px;top:0px;width:1px;height:693px;background:#a3a8ae;"></div>
<div style="left:2px;top:652px;width:1207.5px;height:40px;background:#f7f9f9;"></div>
<span class="t" style="left:17.00px;top:665.64px;font-size:14.6px;color:#4a5560;letter-spacing:0.02px;">Data Visualizer</span>
<svg style="left:1186.3px;top:664.5px;" width="14" height="14" viewBox="0 0 14 14"><path d="M0.8 12.7L12.7 0.8M6.8 0.8H12.7V6.7M0.8 6.8V12.7H6.7" fill="none" stroke="#5a6570" stroke-width="1"/></svg>
<div style="left:1209px;top:613px;width:1px;height:79px;background:#4a5560;"></div>
<div style="left:1208px;top:613px;width:1px;height:79px;background:rgba(74,85,96,0.25);"></div>
<div style="left:0px;top:692px;width:1250px;height:2px;background:#3c4652;"></div>
<div style="left:1px;top:694px;width:1248px;height:85px;background:#ffffff;"></div>
<svg style="left:12.5px;top:706px;" width="13" height="16" viewBox="0 0 13 16"><path d="M0.8 6.5L6.5 0.9L12.2 6.5M0.8 14.9L6.5 9.3L12.2 14.9" fill="none" stroke="#4a5560" stroke-width="1.3"/></svg>
<div style="left:35px;top:694px;width:1px;height:85px;background:#aab0b9;"></div>
<div style="left:36px;top:694px;width:11.5px;height:85px;background:#dbe1ea;"></div>
<svg style="left:38.8px;top:731px;" width="7" height="11" viewBox="0 0 7 11"><path d="M5.5 1L1 5.5L5.5 10" fill="none" stroke="#ffffff" stroke-width="1.2"/></svg>
<div style="left:54px;top:699px;width:115px;height:30px;background:#fff;border:1px solid #9aa2ab;border-radius:4px;"></div>
<svg style="left:59.9px;top:709px;" width="20" height="11.5" viewBox="0 0 20 11.5"><rect x="0" y="0" width="19.6" height="11.2" rx="5.6" fill="#4a5560"/><circle cx="5.6" cy="5.6" r="4.4" fill="#fff"/></svg>
<div style="left:85px;top:702px;width:1px;height:24px;background:#9aa2ab;"></div>
<span class="t" style="left:120.25px;top:703.13px;font-size:21.7px;color:#3f4955;letter-spacing:0.78px;font-weight:bold;">X</span>
<div style="left:174px;top:699px;width:29.6px;height:30px;background:#fff;border:1px solid #dde1e7;border-radius:3px;"></div>
<svg style="left:180px;top:704.5px;" width="19" height="19" viewBox="0 0 19 19"><path d="M0.7 8.6L9.2 1.5L17.7 8.6" fill="none" stroke="#b9c0c8" stroke-width="1.7" stroke-linejoin="miter"/><path d="M2.6 10.4L9.2 4.9L15.9 10.4V17a1 1 0 0 1-1 1H3.6a1 1 0 0 1-1-1z" fill="#b9c0c8"/><rect x="7.4" y="13.2" width="3.6" height="3.6" fill="#ffffff"/></svg>
<span class="t" style="left:219.50px;top:705.96px;font-size:15.4px;color:#4a5560;letter-spacing:-0.28px;">Disabled</span>
<svg style="left:57px;top:736.4px;" width="23" height="23" viewBox="0 0 23 23"><circle cx="11.5" cy="11.5" r="11.4" fill="#dbe1ea"/><circle cx="11.6" cy="6.5" r="1.25" fill="#4a5560"/><rect x="10.6" y="8.9" width="2" height="8.8" rx="0.5" fill="#4a5560"/></svg>
<div style="left:84px;top:734px;width:1px;height:45px;background:#aab0b9;"></div>
<span class="t" style="left:90.00px;top:737.64px;font-size:14.6px;color:#4a5560;letter-spacing:0.06px;">ProgPosFbk (mm)</span>
<span class="t" style="left:90.00px;top:758.32px;font-size:13.5px;color:#3f4955;letter-spacing:0.91px;font-weight:bold;">0.00000</span>
<div style="left:296px;top:694px;width:1px;height:85px;background:#aab0b9;"></div>
<div style="left:302px;top:699px;width:115px;height:30px;background:#fff;border:1px solid #9aa2ab;border-radius:4px;"></div>
<svg style="left:307.9px;top:709px;" width="20" height="11.5" viewBox="0 0 20 11.5"><rect x="0" y="0" width="19.6" height="11.2" rx="5.6" fill="#4a5560"/><circle cx="5.6" cy="5.6" r="4.4" fill="#fff"/></svg>
<div style="left:333px;top:702px;width:1px;height:24px;background:#9aa2ab;"></div>
<span class="t" style="left:368.00px;top:703.13px;font-size:21.7px;color:#3f4955;letter-spacing:1.53px;font-weight:bold;">Y</span>
<div style="left:422px;top:699px;width:29.6px;height:30px;background:#fff;border:1px solid #dde1e7;border-radius:3px;"></div>
<svg style="left:428px;top:704.5px;" width="19" height="19" viewBox="0 0 19 19"><path d="M0.7 8.6L9.2 1.5L17.7 8.6" fill="none" stroke="#b9c0c8" stroke-width="1.7" stroke-linejoin="miter"/><path d="M2.6 10.4L9.2 4.9L15.9 10.4V17a1 1 0 0 1-1 1H3.6a1 1 0 0 1-1-1z" fill="#b9c0c8"/><rect x="7.4" y="13.2" width="3.6" height="3.6" fill="#ffffff"/></svg>
<span class="t" style="left:467.50px;top:705.96px;font-size:15.4px;color:#4a5560;letter-spacing:-0.28px;">Disabled</span>
<svg style="left:305px;top:736.4px;" width="23" height="23" viewBox="0 0 23 23"><circle cx="11.5" cy="11.5" r="11.4" fill="#dbe1ea"/><circle cx="11.6" cy="6.5" r="1.25" fill="#4a5560"/><rect x="10.6" y="8.9" width="2" height="8.8" rx="0.5" fill="#4a5560"/></svg>
<div style="left:332px;top:734px;width:1px;height:45px;background:#aab0b9;"></div>
<span class="t" style="left:338.00px;top:737.64px;font-size:14.6px;color:#4a5560;letter-spacing:0.06px;">ProgPosFbk (mm)</span>
<span class="t" style="left:338.00px;top:758.32px;font-size:13.5px;color:#3f4955;letter-spacing:0.91px;font-weight:bold;">0.00000</span>
<div style="left:544px;top:694px;width:1px;height:85px;background:#aab0b9;"></div>
<div style="left:550px;top:699px;width:115px;height:30px;background:#fff;border:1px solid #9aa2ab;border-radius:4px;"></div>
<svg style="left:555.9px;top:709px;" width="20" height="11.5" viewBox="0 0 20 11.5"><rect x="0" y="0" width="19.6" height="11.2" rx="5.6" fill="#4a5560"/><circle cx="5.6" cy="5.6" r="4.4" fill="#fff"/></svg>
<div style="left:581px;top:702px;width:1px;height:24px;background:#9aa2ab;"></div>
<span class="t" style="left:617.00px;top:703.13px;font-size:21.7px;color:#3f4955;letter-spacing:0.74px;font-weight:bold;">Z</span>
<div style="left:670px;top:699px;width:29.6px;height:30px;background:#fff;border:1px solid #dde1e7;border-radius:3px;"></div>
<svg style="left:676px;top:704.5px;" width="19" height="19" viewBox="0 0 19 19"><path d="M0.7 8.6L9.2 1.5L17.7 8.6" fill="none" stroke="#b9c0c8" stroke-width="1.7" stroke-linejoin="miter"/><path d="M2.6 10.4L9.2 4.9L15.9 10.4V17a1 1 0 0 1-1 1H3.6a1 1 0 0 1-1-1z" fill="#b9c0c8"/><rect x="7.4" y="13.2" width="3.6" height="3.6" fill="#ffffff"/></svg>
<span class="t" style="left:715.50px;top:705.96px;font-size:15.4px;color:#4a5560;letter-spacing:-0.28px;">Disabled</span>
<svg style="left:553px;top:736.4px;" width="23" height="23" viewBox="0 0 23 23"><circle cx="11.5" cy="11.5" r="11.4" fill="#dbe1ea"/><circle cx="11.6" cy="6.5" r="1.25" fill="#4a5560"/><rect x="10.6" y="8.9" width="2" height="8.8" rx="0.5" fill="#4a5560"/></svg>
<div style="left:580px;top:734px;width:1px;height:45px;background:#aab0b9;"></div>
<span class="t" style="left:586.00px;top:737.64px;font-size:14.6px;color:#4a5560;letter-spacing:0.06px;">ProgPosFbk (mm)</span>
<span class="t" style="left:586.00px;top:758.32px;font-size:13.5px;color:#3f4955;letter-spacing:0.9px;font-weight:bold;">0.0000</span>
<div style="left:792px;top:694px;width:1px;height:85px;background:#aab0b9;"></div>
<div style="left:798px;top:699px;width:115px;height:30px;background:#fff;border:1px solid #9aa2ab;border-radius:4px;"></div>
<svg style="left:803.9px;top:709px;" width="20" height="11.5" viewBox="0 0 20 11.5"><rect x="0" y="0" width="19.6" height="11.2" rx="5.6" fill="#4a5560"/><circle cx="5.6" cy="5.6" r="4.4" fill="#fff"/></svg>
<div style="left:829px;top:702px;width:1px;height:24px;background:#9aa2ab;"></div>
<span class="t" style="left:864.50px;top:703.13px;font-size:21.7px;color:#3f4955;letter-spacing:-0.67px;font-weight:bold;">U</span>
<div style="left:918px;top:699px;width:29.6px;height:30px;background:#fff;border:1px solid #dde1e7;border-radius:3px;"></div>
<svg style="left:924px;top:704.5px;" width="19" height="19" viewBox="0 0 19 19"><path d="M0.7 8.6L9.2 1.5L17.7 8.6" fill="none" stroke="#b9c0c8" stroke-width="1.7" stroke-linejoin="miter"/><path d="M2.6 10.4L9.2 4.9L15.9 10.4V17a1 1 0 0 1-1 1H3.6a1 1 0 0 1-1-1z" fill="#b9c0c8"/><rect x="7.4" y="13.2" width="3.6" height="3.6" fill="#ffffff"/></svg>
<span class="t" style="left:963.50px;top:705.96px;font-size:15.4px;color:#4a5560;letter-spacing:-0.28px;">Disabled</span>
<svg style="left:801px;top:736.4px;" width="23" height="23" viewBox="0 0 23 23"><circle cx="11.5" cy="11.5" r="11.4" fill="#dbe1ea"/><circle cx="11.6" cy="6.5" r="1.25" fill="#4a5560"/><rect x="10.6" y="8.9" width="2" height="8.8" rx="0.5" fill="#4a5560"/></svg>
<div style="left:828px;top:734px;width:1px;height:45px;background:#aab0b9;"></div>
<span class="t" style="left:834.00px;top:737.64px;font-size:14.6px;color:#4a5560;letter-spacing:0.06px;">ProgPosFbk (mm)</span>
<span class="t" style="left:834.00px;top:758.32px;font-size:13.5px;color:#3f4955;letter-spacing:0.9px;font-weight:bold;">0.0000</span>
<div style="left:1237.5px;top:694px;width:12.5px;height:85px;background:#0080bc;border-radius:0 0 7px 0;"></div>
<svg style="left:1240.5px;top:730.5px;" width="7" height="11" viewBox="0 0 7 11"><path d="M1.2 1L5.8 5.5L1.2 10" fill="none" stroke="#ffffff" stroke-width="1.2"/></svg>
<div style="left:0px;top:693px;width:1250px;height:86px;overflow:hidden;background:transparent;"><div style="left:0;top:-20px;width:1250px;height:106px;border:1px solid #9a9ea4;border-radius:0 0 8px 8px;box-shadow:0 0 0 12px #c9ccd0;"></div></div>
</div></body></html>
